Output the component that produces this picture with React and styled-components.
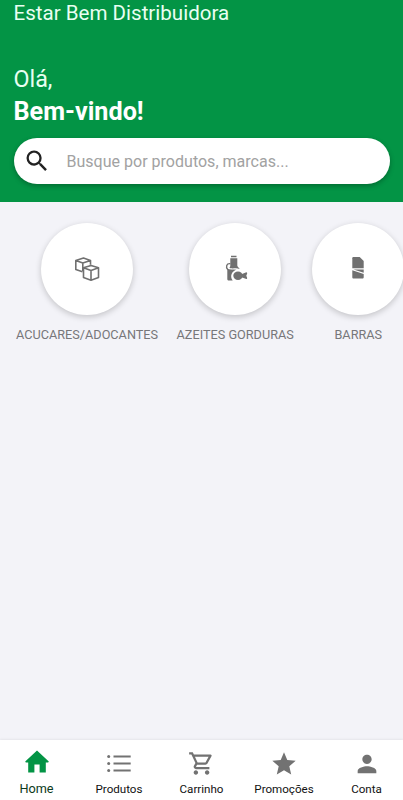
import React, { useState } from 'react';
import styled, { createGlobalStyle } from 'styled-components';
import {
  MdOutlineShoppingCart,
  MdPerson,
  MdSearch,
  MdStar,
} from 'react-icons/md';

const GlobalStyle = createGlobalStyle`
  * {
    box-sizing: border-box;
  }

  body {
    margin: 0;
    font-family: Roboto, sans-serif;
  }
`;

const Screen = styled.div`
  display: flex;
  flex-direction: column;
  width: 403px;
  height: 800px;
  overflow: hidden;
  background-color: #f3f3f8;
`;

const Header = styled.header`
  height: 202px;
  padding: 0 13.5px;
  background-color: #039445;
  color: #e9fff2;
`;

const Company = styled.div`
  height: 26px;
  font-size: 20.55px;
  line-height: 26px;
`;

const Greeting = styled.h1`
  margin: 37px 0 10px;
  font-size: 23.3px;
  font-weight: 400;
  line-height: 32.5px;
`;

const Welcome = styled.strong`
  display: block;
  color: #fff;
  font-size: 25.2px;
  font-weight: 700;
`;

const SearchBar = styled.label`
  display: flex;
  align-items: center;
  gap: 16px;
  height: 46px;
  padding: 0 20px 0 9px;
  border-radius: 23px;
  background-color: #fff;
  color: #222;
  box-shadow: 0 2px 5px rgba(0, 0, 0, 0.28);
`;

const SearchInput = styled.input`
  flex: 1;
  min-width: 0;
  padding: 0;
  border: none;
  outline: none;
  background: transparent;
  font-family: inherit;
  font-size: 16.05px;

  &::placeholder {
    color: #a2a2a2;
    opacity: 1;
  }
`;

const Categories = styled.main`
  display: flex;
  flex: 1;
  align-items: flex-start;
  gap: 18.5px;
  padding: 21px 0 0 16px;
`;

const Category = styled.div`
  display: flex;
  flex: none;
  flex-direction: column;
  align-items: center;
  gap: 12px;
  color: #77777a;
  font-size: 12.7px;
  line-height: 16px;
`;

const Circle = styled.div`
  display: flex;
  align-items: center;
  justify-content: center;
  width: 92px;
  height: 92px;
  border-radius: 50%;
  background-color: #fff;
  color: #707070;
  box-shadow: 0 2px 6px rgba(0, 0, 0, 0.2);
`;

const TabBar = styled.nav`
  display: grid;
  grid-template-columns: repeat(5, 82.5px);
  justify-content: center;
  height: 60px;
  background-color: #fff;
  box-shadow: 0 -1px 2px rgba(0, 0, 0, 0.06);
`;

const Tab = styled.button`
  display: flex;
  flex-direction: column;
  align-items: center;
  padding: ${({ $active }) => ($active ? '6px' : '9px')} 0 0;
  border: none;
  background: none;
  color: ${({ $active }) => ($active ? '#039445' : '#727272')};
  cursor: pointer;
`;

const TabIcon = styled.span`
  display: flex;
  align-items: center;
  height: ${({ $active }) => ($active ? '32px' : '29px')};
`;

const TabLabel = styled.span`
  color: ${({ $active }) => ($active ? '#0b3a20' : '#111')};
  font-family: Roboto, sans-serif;
  font-size: ${({ $active }) => ($active ? '12.7px' : '11.6px')};
  line-height: ${({ $active }) => ($active ? '21px' : '22px')};
`;

const CubesIcon = () => (
  <svg width="26" height="26" viewBox="0 0 26 26" fill="none" stroke="currentColor" strokeWidth="1.6" strokeLinejoin="round">
    <path d="M8.500 15.800 1.800 13.500V4.500L9.500 2l7 2.500v4.300M1.800 4.500l7 2.500 7.700-2.500M8.800 7v8" />
    <path d="M9.500 11.800 17 9.500l7.500 2.300v9.700L17 24.200l-7.500-2.700zM9.500 11.800l7.500 2.700 7.500-2.700M17 14.500v9.700" />
  </svg>
);

const OilIcon = () => (
  <svg width="26" height="28" viewBox="0 0 26 28" fill="currentColor">
    <path d="M9 .8h5.500v1.500H9zM8.300 3.200h7v7.300c.2 1.500 1.500 2.200 2.400 3.500-3.200-1.500-5.700-.3-8.700-.7-1-.2-1.600-.6-1.600-.6 1-1 .9-2 .9-3z" />
    <path d="M5.300 13.700c2.500 1.200 6 .5 9.200 1-4 .9-7.300 6-3.800 10.800H7c-1 0-1.700-.6-1.700-1.600z" />
    <ellipse cx="16" cy="20.700" rx="4.700" ry="4.200" />
    <path d="M19.500 19.200 24.300 17.300c.8.200 1 .8.800 1.400l-.8 2 .8 2c.2.600 0 1.200-.8 1.400l-4.800-1.900z" />
    <path d="M8.300 8.700C4.600 8.200 3.300 12 5.900 14.800" fill="none" stroke="currentColor" strokeWidth="1.400" />
  </svg>
);

const BarIcon = () => (
  <svg width="12" height="26" viewBox="0 0 12 26" fill="currentColor">
    <path d="M1.500 1h6.200L11.700 5v7.200H.300V2.200C.300 1.500.800 1 1.500 1z" />
    <path d="M1.500 13.500h10.200v3.200zM.300 14.300l11.400 3.600v3.400c0 .800-.500 1.300-1.300 1.300H1.600C.800 22.600.300 22.100.300 21.300z" />
  </svg>
);

const HomeIcon = () => (
  <svg width="24" height="24" viewBox="0 0 24 24" fill="currentColor">
    <path d="M12 .6 23.800 11.600l-.6.900h-2.400V22.500h-6.200V14.600H9.400v7.900H3.200V12.500H.8l-.6-.9z" />
  </svg>
);

const ListIcon = () => (
  <svg width="24" height="18" viewBox="0 0 24 18" fill="currentColor">
    <circle cx="1.700" cy="1.500" r="1.500" />
    <circle cx="1.700" cy="8.500" r="1.500" />
    <circle cx="1.700" cy="15.500" r="1.500" />
    <path d="M6.500.500h17.200v2H6.500zM6.500 7.500h17.200v2H6.500zM6.500 14.500h17.200v2H6.500z" />
  </svg>
);

const categories = [
  { name: 'ACUCARES/ADOCANTES', icon: <CubesIcon /> },
  { name: 'AZEITES GORDURAS', icon: <OilIcon /> },
  { name: 'BARRAS', icon: <BarIcon /> },
];

const tabs = [
  { name: 'Home', icon: <HomeIcon /> },
  { name: 'Produtos', icon: <ListIcon /> },
  { name: 'Carrinho', icon: <MdOutlineShoppingCart size={27} /> },
  { name: 'Promoções', icon: <MdStar size={28} /> },
  { name: 'Conta', icon: <MdPerson size={28} /> },
];

const App = () => {
  const [search, setSearch] = useState('');
  const [activeTab, setActiveTab] = useState('Home');

  return (
    <Screen>
      <GlobalStyle />
      <Header>
        <Company>Estar Bem Distribuidora</Company>
        <Greeting>
          Olá,
          <Welcome>Bem-vindo!</Welcome>
        </Greeting>
        <SearchBar>
          <MdSearch size={28} />
          <SearchInput
            placeholder="Busque por produtos, marcas..."
            value={search}
            onChange={(e) => setSearch(e.target.value)}
          />
        </SearchBar>
      </Header>
      <Categories>
        {categories.map(({ name, icon }) => (
          <Category key={name}>
            <Circle>{icon}</Circle>
            {name}
          </Category>
        ))}
      </Categories>
      <TabBar>
        {tabs.map(({ name, icon }) => (
          <Tab
            key={name}
            type="button"
            $active={name === activeTab}
            onClick={() => setActiveTab(name)}
          >
            <TabIcon $active={name === activeTab}>{icon}</TabIcon>
            <TabLabel $active={name === activeTab}>{name}</TabLabel>
          </Tab>
        ))}
      </TabBar>
    </Screen>
  );
};

export default App;
